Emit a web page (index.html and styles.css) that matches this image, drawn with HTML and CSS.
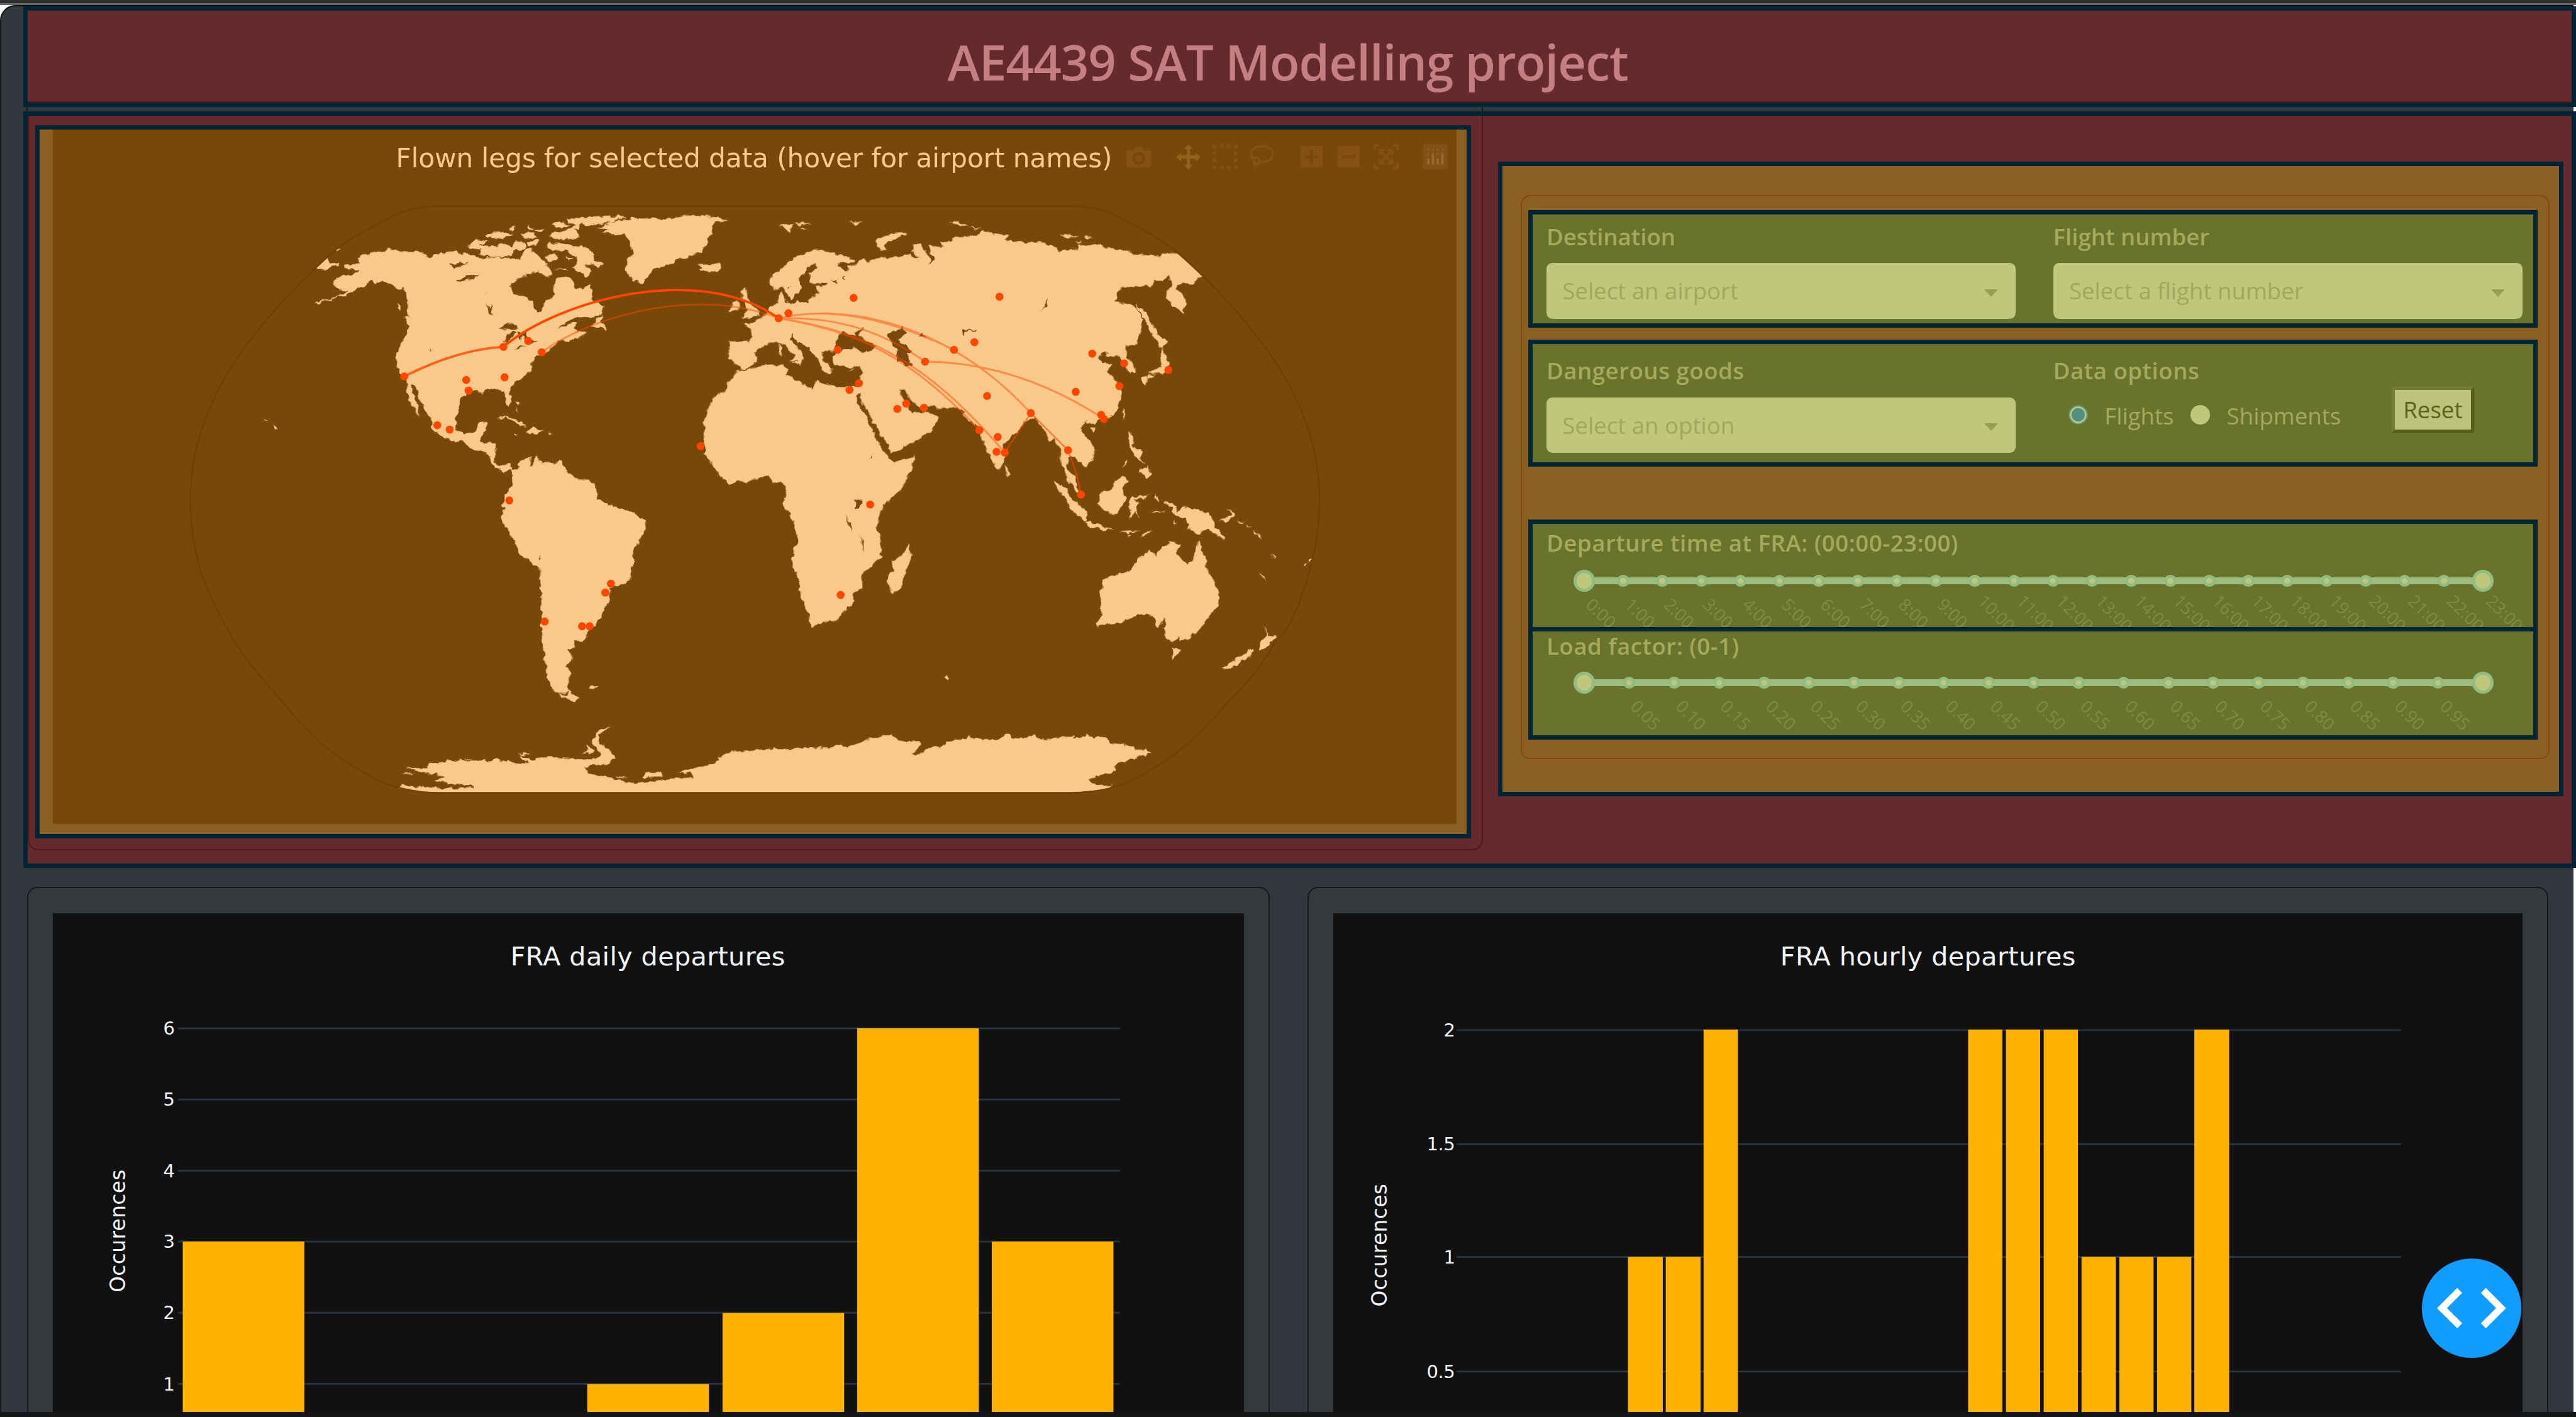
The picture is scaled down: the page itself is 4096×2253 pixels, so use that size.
FILE: index.html
```html
<!DOCTYPE html>
<html lang="en">
<head>
<meta charset="utf-8">
<title>AE4439 SAT Modelling project</title>
<link rel="stylesheet" href="styles.css">
</head>
<body>
<div class="screen">
  <div class="topstrip"></div>
  <div class="stage">
    <header class="outline header"><h1>AE4439 SAT Modelling project</h1></header>
    <div class="seam"></div>
    <section class="outline main-row">
      <div class="card-frame"></div>
      <div class="outline map-box">
        <svg class="map" viewBox="89 218 2377 1176">
          <defs>
            <!-- Roughens the coastlines -->
            <filter id="coast" filterUnits="userSpaceOnUse" x="300" y="330" width="1960" height="1050">
              <feTurbulence type="fractalNoise" baseFrequency="0.09" numOctaves="2" seed="4"/>
              <feDisplacementMap in="SourceGraphic" scale="10" xChannelSelector="R" yChannelSelector="G"/>
            </filter>
            <clipPath id="globe-clip"><path d="M746,348H1810C1850,348 1880,356 1899,369C1932,386 1960,400 1985,419C2080,500 2160,600 2192,669C2222,730 2234,790 2234,844C2234,890 2228,920 2221,950C2200,1030 2180,1070 2160,1084C2130,1140 2095,1170 2065,1203C2030,1245 1990,1280 1937,1308C1905,1330 1860,1341 1810,1341H746C700,1341 650,1330 619,1308C565,1280 525,1245 491,1203C460,1165 425,1130 396,1084C365,1030 345,990 335,950C328,920 322,890 322,844C322,790 334,730 364,669C396,600 476,500 571,419C596,400 624,386 657,369C676,356 706,348 746,348Z"/></clipPath>
          </defs>
          <rect class="map-bg" x="89" y="218" width="2377" height="1176"/>
          <g clip-path="url(#globe-clip)"><g filter="url(#coast)">
          <g class="land">
            <!-- North America, Greenland -->
            <g transform="translate(300 330) scale(.63776 .35714)">
              <path d="M475,290 500,278 540,262 565,252 580,262 600,266 640,268 668,290 690,278 715,272 740,265 760,275 780,278 800,300 850,290 880,298 900,303 915,285 925,255 935,248 950,270 965,290 980,325 975,345 935,370 910,390 890,410 885,435 895,465 930,485 945,500 945,525 955,562 968,545 972,510 985,500 1000,470 1000,440 1005,390 1025,385 1050,400 1060,440 1075,445 1095,420 1100,460 1108,495 1132,525 1125,560 1105,580 1060,575 1035,590 1008,635 1040,605 1062,600 1052,625 1060,650 1085,645 1075,665 1035,690 1010,690 990,725 970,750 950,765 940,790 940,835 900,880 885,905 883,940 887,980 880,1005 873,985 868,930 850,918 825,915 812,935 785,930 765,945 750,970 748,1000 740,1050 740,1100 760,1130 790,1118 800,1080 825,1072 815,1120 805,1168 845,1172 847,1200 840,1250 855,1285 880,1270 892,1300 880,1295 865,1315 850,1295 835,1265 820,1220 800,1210 775,1195 755,1160 738,1170 700,1140 675,1105 675,1060 655,1010 640,960 632,900 622,893 622,920 632,970 638,1010 643,1050 630,1010 615,970 610,920 608,870 590,840 580,770 585,730 605,675 615,620 600,570 615,575 612,540 607,460 605,445 585,445 560,415 535,405 525,420 515,400 490,430 465,460 430,480 365,512 370,500 420,480 455,450 430,445 412,415 425,385 470,370 480,350 445,345 445,330 485,320Z"/>
              <path d="M350,280 385,290 400,298 408,318 428,322 425,335 410,338 394,354 350,330ZM415,250 425,245 434,252 424,256ZM600,572 628,595 626,632 616,600ZM585,512 592,520 592,545 586,535Z"/>
              <path d="M765,240 790,208 830,215 800,235 850,240 855,225 890,240 900,215 925,225 925,250 895,260 890,285 830,290 800,275 805,255 780,250ZM985,225 1015,225 1030,232 1060,238 1075,228 1105,275 1110,310 1130,320 1115,345 1100,320 1085,325 1100,355 1088,385 1060,360 1045,345 1060,320 1060,290 1030,262 990,255 980,240ZM1030,115 1100,98 1195,98 1150,125 1105,140 1070,135 1065,160 1050,155 1070,180 1060,205 1000,205 985,185 1030,165 1060,135 1035,128ZM992,140 1010,120 1040,140 1020,155ZM815,185 850,170 895,180 865,200 825,198ZM880,158 900,145 890,168ZM930,142 950,155 935,165ZM945,165 975,155 970,170ZM910,180 950,180 955,200 925,205ZM930,215 960,210 950,240 932,235ZM975,290 1000,270 1010,290 985,318ZM958,358 980,335 998,372 980,385ZM1000,350 1030,345 1040,352ZM1030,290 1050,298 1040,308ZM1095,620 1128,562 1125,595 1142,632 1118,620 1105,625ZM1035,690 1060,655 1085,650 1065,675Z"/>
              <path d="M1115,155 1150,125 1210,105 1290,112 1370,92 1415,98 1465,118 1425,125 1420,180 1408,200 1410,215 1390,270 1340,295 1305,325 1270,340 1250,380 1237,420 1205,400 1190,350 1195,300 1212,270 1200,215 1185,185 1125,180 1145,160ZM1378,325 1390,322 1405,330 1440,318 1442,345 1410,364 1382,352 1395,340Z"/>
              <path d="M255,1080 266,1105 258,1115ZM232,1058 240,1066 236,1070ZM845,1062 865,1045 890,1052 925,1095 910,1095 890,1065 868,1052ZM925,1125 945,1100 970,1120 955,1130ZM892,1125 905,1130 895,1137ZM983,1122 995,1128 985,1134ZM900,972 914,985 902,990ZM900,1000 906,1030 901,1025Z"/>
            </g>
            <!-- Europe, Asia, northern Africa -->
            <g transform="translate(1150 330) scale(.70153 .35714)">
              <path d="M120,690 165,692 175,665 172,630 155,608 180,602 185,590 205,570 215,555 218,525 238,515 238,475 248,452 255,500 268,515 285,505 310,508 320,480 335,465 330,430 360,425 355,412 325,420 315,400 315,370 333,345 325,325 308,335 305,365 290,385 290,415 295,440 280,470 270,495 262,470 250,430 230,448 217,420 215,390 240,355 265,310 290,280 325,255 345,258 360,272 400,285 420,300 418,320 380,318 395,350 410,358 408,335 425,330 440,292 455,318 470,300 500,290 530,295 540,275 580,298 562,265 565,230 585,230 592,260 605,290 602,325 617,300 605,265 600,232 638,245 630,218 655,215 660,198 720,185 735,168 755,182 795,185 785,212 830,220 880,222 905,245 920,260 960,255 965,235 1010,235 1045,255 1080,258 1095,275 1160,288 1165,275 1200,272 1225,295 1250,340 1272,378 1255,390 1240,418 1200,420 1198,440 1220,475 1222,500 1216,562 1195,525 1172,480 1188,415 1180,378 1170,400 1145,400 1142,428 1070,430 1060,460 1052,500 1085,515 1105,530 1118,590 1112,660 1105,700 1080,710 1078,765 1092,790 1102,830 1090,848 1078,810 1068,790 1060,755 1035,765 1033,735 1008,765 1020,790 1045,795 1032,835 1050,870 1068,935 1060,1000 1045,1045 1010,1065 1000,1080 982,1068 968,1105 980,1135 1000,1180 1002,1240 978,1290 968,1258 945,1235 936,1260 935,1290 955,1340 967,1420 955,1400 940,1350 925,1290 918,1200 905,1150 892,1170 885,1120 870,1090 858,1050 845,1060 828,1075 820,1110 780,1180 785,1250 768,1302 755,1250 740,1200 728,1130 718,1080 712,1090 695,1055 670,1005 630,1008 600,995 590,1008 565,990 545,920 530,925 545,975 560,1028 600,1025 625,1055 610,1110 575,1160 510,1220 500,1170 475,1100 455,1020 433,960 438,930 425,950 430,980 455,1060 475,1150 500,1230 515,1265 567,1235 560,1300 540,1380 500,1450 485,1500 474,1570 280,1570 270,1520 250,1460 258,1390 245,1355 225,1365 215,1330 190,1335 165,1360 145,1352 120,1368 85,1300 80,1270 58,1220 62,1140 58,1070 78,965 112,920 118,880 142,830 175,822 190,808 250,800 262,825 255,850 290,880 320,920 330,880 385,905 430,905 438,870 438,808 420,815 395,810 370,790 370,765 385,740 420,722 440,738 465,735 475,715 440,680 430,660 447,630 420,640 425,660 405,660 395,640 385,660 375,710 380,738 345,742 345,775 370,825 358,838 345,825 335,780 315,725 285,690 270,652 268,685 290,730 300,765 292,808 285,785 265,780 282,760 255,710 235,692 205,708 182,745 185,780 170,815 150,820 118,770Z"/>
              <path d="M147,455 163,440 160,465 178,520 190,545 195,568 148,580 165,545 155,500ZM120,545 130,500 145,505 142,545ZM475,245 480,205 510,180 548,175 545,185 510,210 495,235 502,262ZM240,140 275,135 268,175ZM275,130 320,130 290,140ZM292,155 308,158 298,166ZM410,126 442,126 425,134ZM650,125 670,120 700,148 680,145ZM700,150 732,155 715,160ZM922,183 965,192 930,202ZM975,190 1000,198 980,202ZM955,215 972,222 962,228ZM1103,513 1125,550 1145,620 1160,675 1180,690 1165,725 1152,690 1120,580ZM1165,725 1178,775 1182,835 1155,848 1130,840 1165,810 1160,770ZM1112,865 1130,850 1132,870 1125,905ZM1130,850 1150,850 1135,868ZM1070,1005 1078,1035 1073,1057ZM992,1098 1005,1100 998,1128ZM1083,1120 1097,1140 1093,1185 1120,1215 1112,1250 1125,1275 1105,1250 1090,1205ZM1105,1305 1130,1280 1137,1315 1128,1342 1118,1315ZM1082,1248 1068,1298 1080,1270ZM785,1275 798,1320 790,1337ZM1010,1410 1035,1400 1068,1325 1082,1350 1070,1390 1078,1430 1060,1510 1025,1495 1012,1460ZM242,700 248,720 245,765 240,735ZM265,785 290,790 285,805ZM352,828 370,832 358,842ZM407,828 422,822 415,832Z"/>
            </g>
            <!-- South America, Antarctica west -->
            <g transform="translate(300 760) scale(.63776 .39541)">
              <path d="M888,90 905,75 915,45 940,28 937,70 943,72 950,30 970,60 1000,60 1020,50 1030,85 1045,105 1065,128 1090,128 1105,150 1117,195 1112,215 1160,245 1200,262 1240,300 1244,340 1225,390 1212,430 1210,500 1200,555 1190,572 1150,595 1143,660 1125,710 1108,755 1085,780 1088,805 1075,820 1053,818 1055,850 1035,855 1047,880 1040,910 1028,930 1045,960 1032,1010 1045,1045 1070,1065 1055,1076 1020,1060 995,1020 980,975 980,930 970,850 965,790 967,700 965,600 962,520 945,490 910,450 890,380 865,315 858,290 870,255 862,245 870,200 890,155ZM1093,1022 1103,1010 1115,1018 1105,1026Z"/>
              <path d="M605,1362 665,1365 668,1345 740,1330 835,1332 845,1325 890,1340 935,1345 905,1312 940,1325 990,1315 1060,1325 1115,1322 1122,1300 1100,1245 1118,1205 1152,1183 1122,1222 1115,1250 1145,1280 1163,1325 1140,1345 1080,1358 1090,1385 1140,1405 1220,1430 1290,1415 1372,1402 1365,1388 1330,1382 1385,1358 1440,1335 1438,1320 1470,1292 1590,1280V1500H590V1437L700,1450 788,1448 788,1440 735,1436 680,1415 712,1402 690,1392 650,1385ZM1085,1262 1108,1290 1105,1305 1072,1298 1090,1292ZM1232,1405 1250,1378 1275,1375 1288,1390 1280,1402ZM903,1300 940,1303 915,1310ZM593,1378 630,1390 610,1390ZM760,1317 785,1325 765,1325ZM1165,1400 1195,1402 1170,1406Z"/>
            </g>
            <!-- Southern Africa, Oceania, Antarctica east -->
            <g transform="translate(1150 760) scale(.70153 .43367)">
              <path d="M275,285 285,325 287,360 277,390 270,435 288,510 293,580 313,650 315,685 322,691 345,677 375,670 395,640 418,600 422,558 442,540 440,485 485,425 487,350 477,320 477,285ZM553,368 560,410 530,545 515,558 505,540 503,495 515,475 513,435 540,410Z"/>
              <path d="M1010,692 1005,678 1018,650 1015,580 1022,510 1045,490 1085,475 1105,430 1135,393 1153,412 1165,375 1185,370 1180,355 1210,370 1197,405 1228,449 1240,425 1255,348 1262,400 1270,410 1272,465 1290,515 1303,560 1300,605 1280,650 1260,690 1240,728 1208,748 1205,735 1190,747 1173,738 1172,660 1155,695 1145,655 1130,642 1090,655 1065,678 1035,680ZM1188,776 1212,778 1190,817ZM1413,686 1422,725 1440,732 1420,765 1398,788 1405,750 1418,725ZM1385,775 1388,792 1330,857 1312,850 1345,815ZM1400,480 1417,515 1405,500ZM1505,450 1515,440 1510,458ZM1516,432 1526,425 1520,438ZM1430,402 1436,415 1434,432ZM638,890 645,885 652,895 645,903Z"/>
              <path d="M902,120 915,125 955,200 983,240 981,282 950,240 925,180ZM978,285 990,280 1050,315 1020,312 985,298ZM1085,215 1092,185 1132,176 1125,188 1097,195 1110,210 1100,230 1113,270 1100,240 1088,275ZM1062,318 1080,316 1110,320 1085,325ZM1082,330 1092,338 1086,340ZM1112,342 1125,320 1142,318ZM1150,168 1156,200 1148,190ZM1138,240 1172,240 1150,248ZM1195,270 1202,285 1196,290ZM1170,210 1190,205 1200,225 1200,242 1222,220 1278,248 1290,285 1300,310 1317,345 1295,338 1275,305 1255,327 1225,312 1232,290 1222,270 1190,250 1190,225ZM1303,274 1325,265 1332,250 1322,230 1340,248 1330,275 1315,283ZM1348,268 1362,292 1355,288ZM1368,292 1382,300 1372,300ZM1385,312 1395,330 1388,328ZM1392,320 1402,332 1404,350Z"/>
              <path d="M150,1182 180,1182 210,1178 230,1163 240,1172 310,1163 360,1165 380,1148 405,1160 455,1135 510,1110 520,1125 545,1140 580,1138 582,1150 562,1188 575,1190 605,1162 630,1158 665,1130 697,1130 700,1118 705,1130 770,1130 795,1108 805,1123 835,1128 855,1112 865,1127 890,1130 905,1122 980,1120 985,1107 990,1123 1030,1125 1040,1142 1075,1150 1100,1168 1125,1170 1140,1182 1060,1225 1045,1258 990,1282 990,1298 1010,1315 1040,1310 1040,1370H150Z"/>
            </g>
          </g>
          <g class="lake">
            <path transform="translate(300 330) scale(.63776 .35714)" d="M725,325 745,317 770,322 755,335 735,342ZM737,400 765,380 802,375 775,395 750,408ZM825,455 812,480 820,465ZM818,512 828,540 832,512 838,570 825,550ZM852,632 885,600 905,630 895,640 875,630ZM868,700 875,660 900,645 885,680ZM903,645 930,650 927,690 915,660 910,685ZM897,722 925,710 905,728ZM930,690 958,685 945,697ZM672,722 678,735 673,738Z"/>
            <path transform="translate(1150 330) scale(.70153 .35714)" d="M502,665 515,640 540,630 545,655 528,680 535,700 550,712 562,740 550,750 562,800 548,812 525,780 525,730ZM580,672 585,645 595,678 586,665ZM682,662 686,637 716,637 716,642 690,642 686,665ZM883,488 888,520 866,556 882,525ZM367,395 383,405 378,420ZM397,378 404,400 396,395ZM262,435 270,430 265,445ZM425,1445 440,1437 440,1460 432,1487 422,1485ZM460,1228 464,1238 461,1242Z"/>
            <path transform="translate(1150 760) scale(.70153 .43367)" d="M403,248 417,320 408,300ZM438,330 446,398 440,375Z"/>
            <path transform="translate(300 760) scale(.63776 .39541)" d="M957,453 969,470 964,472ZM1000,1040 1027,1048 1038,1022 1030,1055Z"/>
          </g>
          </g></g>
          <path class="globe" d="M746,348H1810C1850,348 1880,356 1899,369C1932,386 1960,400 1985,419C2080,500 2160,600 2192,669C2222,730 2234,790 2234,844C2234,890 2228,920 2221,950C2200,1030 2180,1070 2160,1084C2130,1140 2095,1170 2065,1203C2030,1245 1990,1280 1937,1308C1905,1330 1860,1341 1810,1341H746C700,1341 650,1330 619,1308C565,1280 525,1245 491,1203C460,1165 425,1130 396,1084C365,1030 345,990 335,950C328,920 322,890 322,844C322,790 334,730 364,669C396,600 476,500 571,419C596,400 624,386 657,369C676,356 706,348 746,348Z"/>
          <g class="legs">
            <path class="strong" d="M852,586C940,510 1180,440 1318,537.5"/>
            <path class="mid" d="M684,636Q775,590 852,586"/>
            <path d="M917,595C990,540 1170,480 1318,537.5M1318,537.5C1400,518 1500,535 1615,591M1318,537.5C1410,515 1590,530 1745,698M1318,537.5C1400,535 1480,550 1566,611M1318,537.5C1450,560 1540,600 1658,727M1318,537.5C1460,560 1560,600 1701,765M1566,611C1680,612 1780,650 1869,708"/>
            <path class="thin" d="M1745,698 1701,765M1745,698 1808,761Q1824,800 1830,836"/>
          </g>
          <path class="airports" d="M684,636h0M789,642h0M793,660h0M854,637.5h0M852,586h0M894,576h0M917,595h0M740,718.6h0M761,726h0M1186,754h0M862,846h0M1318,537.5h0M1334.5,529h0M1445,503h0M1692,501h0M1615,591h0M1649.5,578h0M1566,611h0M1418,591h0M1454,647.5h0M1438,659h0M1534,682h0M1519,691h0M1564,689h0M1671,669h0M1821,662h0M1849,597.5h0M1903,614h0M1978,625h0M1895,652.5h0M1864,701h0M1869,708h0M1745,698h0M1658,727h0M1689,738.6h0M1687,763.6h0M1701,765h0M1808,761h0M1830,836h0M1473,853h0M1034,987h0M1024.5,1002h0M922,1051h0M985,1059h0M998,1059h0M1423,1006h0"/>
          <text class="map-title" x="670" y="281.500" textLength="1213">Flown legs for selected data (hover for airport names)</text>
          <g class="modebar">
            <path fill-rule="evenodd" d="M1911,253h8l4,-6h10l4,6h8q4,0 4,4v21q0,4 -4,4h-34q-4,0 -4,-4v-21q0,-4 4,-4ZM1928,256a11,11 0 1 0 .1,0ZM1928,260.500a6,6 0 1 1 -.1,0Z"/>
            <path class="active" d="M2012,243l7,8h-4.500v10.500h10v-4.500l8,7.500 -8,7.500v-4.500h-10v10.500h4.500l-7,8 -7,-8h4.500v-10.500h-10v4.500l-8,-7.500 8,-7.500v4.500h10v-10.500h-4.500Z"/>
            <path d="M2053,243h6v6h-6ZM2066,243h6v6h-6ZM2077,243h6v6h-6ZM2089,243h6v6h-6ZM2053,255h6v6h-6ZM2089,255h6v6h-6ZM2053,267h6v6h-6ZM2089,267h6v6h-6ZM2053,279h6v6h-6ZM2066,279h6v6h-6ZM2077,279h6v6h-6ZM2089,279h6v6h-6Z"/>
            <path class="line" d="M2123,270C2110,256 2124,246 2137,246C2160,247 2162,272 2136,273L2131,272M2121,267C2127,262 2134,268 2131,273C2128,278 2121,276 2121,267L2126,280L2133,273"/>
            <path fill-rule="evenodd" d="M2202,246h37v36h-37ZM2218,253v9h-8v5h8v9h5v-9h8v-5h-8v-9ZM2265,246h37v36h-37ZM2273,261v6h21v-6Z"/>
            <path class="line" d="M2327,253v-8h8M2358,245h8v8M2366,275v8h-8M2335,283h-8v-8M2336,253L2357,275M2357,253L2336,275M2336,261v-8h8M2349,253h8v8M2357,267v8h-8M2344,275h-8v-8"/>
            <path class="logo" d="M2411,243h38q2,0 2,2v38q0,2 -2,2h-38q-2,0 -2,-2v-38q0,-2 2,-2Z"/>
            <path class="logo-bars" d="M2418,267v10M2426,259v18M2434,267v10M2442,259v18"/>
            <path class="logo-dots" d="M2418,251v3M2426,251v3M2434,251v3M2442,251v3M2418,258v3M2434,258v3"/>
          </g>
        </svg>
      </div>
      <div class="outline side">
        <div class="side-card">
          <div class="outline panel panel-a">
            <div class="field"><label>Destination</label><div class="select">Select an airport<i></i></div></div>
            <div class="field"><label>Flight number</label><div class="select">Select a flight number<i></i></div></div>
          </div>
          <div class="outline panel panel-b">
            <div class="field"><label class="wide">Dangerous goods</label><div class="select">Select an option<i></i></div></div>
            <div class="field options"><label class="wide">Data options</label>
              <div class="radios"><b class="radio on"></b><span class="w1">Flights</span><b class="radio"></b><span class="w2">Shipments</span></div>
            </div>
            <div class="reset">Reset</div>
          </div>
          <div class="outline panel-c">
            <label class="wide">Departure time at FRA: (00:00-23:00)</label>
            <div class="slider">
              <div class="m end"><span>0:00</span></div><div class="m"><span>1:00</span></div><div class="m"><span>2:00</span></div><div class="m"><span>3:00</span></div><div class="m"><span>4:00</span></div><div class="m"><span>5:00</span></div><div class="m"><span>6:00</span></div><div class="m"><span>7:00</span></div><div class="m"><span>8:00</span></div><div class="m"><span>9:00</span></div><div class="m"><span>10:00</span></div><div class="m"><span>11:00</span></div><div class="m"><span>12:00</span></div><div class="m"><span>13:00</span></div><div class="m"><span>14:00</span></div><div class="m"><span>15:00</span></div><div class="m"><span>16:00</span></div><div class="m"><span>17:00</span></div><div class="m"><span>18:00</span></div><div class="m"><span>19:00</span></div><div class="m"><span>20:00</span></div><div class="m"><span>21:00</span></div><div class="m"><span>22:00</span></div><div class="m end"><span>23:00</span></div>
            </div>
          </div>
          <div class="outline panel-d">
            <label class="wide">Load factor: (0-1)</label>
            <div class="slider">
              <div class="m end"></div><div class="m"><span>0.05</span></div><div class="m"><span>0.10</span></div><div class="m"><span>0.15</span></div><div class="m"><span>0.20</span></div><div class="m"><span>0.25</span></div><div class="m"><span>0.30</span></div><div class="m"><span>0.35</span></div><div class="m"><span>0.40</span></div><div class="m"><span>0.45</span></div><div class="m"><span>0.50</span></div><div class="m"><span>0.55</span></div><div class="m"><span>0.60</span></div><div class="m"><span>0.65</span></div><div class="m"><span>0.70</span></div><div class="m"><span>0.75</span></div><div class="m"><span>0.80</span></div><div class="m"><span>0.85</span></div><div class="m"><span>0.90</span></div><div class="m"><span>0.95</span></div><div class="m end"></div>
            </div>
          </div>
        </div>
      </div>
    </section>
    <section class="charts">
      <div class="chart-card left">
        <svg viewBox="89 1546 2017 845">
          <rect class="plot" x="89" y="1546" width="2017" height="845"/>
          <path class="grid" d="M301,1741H1896M301,1861.500H1896M301,1982H1896M301,2102H1896M301,2222.500H1896M301,2343H1896"/>
          <path class="bars" d="M309,2102H515V2391H309ZM994,2343.500H1200V2391H994ZM1223,2223H1429V2391H1223ZM1451,1741H1657V2391H1451ZM1679,2102H1885V2391H1679Z"/>
          <text class="chart-title" x="864" y="1634" textLength="465">FRA daily departures</text>
          <g class="ticks"><text x="295" y="1752">6</text><text x="295" y="1872">5</text><text x="295" y="1993">4</text><text x="295" y="2113">3</text><text x="295" y="2233">2</text><text x="295" y="2354">1</text></g>
          <text class="axis" transform="translate(211 2188) rotate(-90)" textLength="208">Occurences</text>
        </svg>
      </div>
      <div class="chart-card right">
        <svg viewBox="2258 1546 2014 845">
          <rect class="plot" x="2258" y="1546" width="2014" height="845"/>
          <path class="grid" d="M2467,1744H4066M2467,1937H4066M2467,2128H4066M2467,2322H4066"/>
          <path class="bars" d="M2757,2128H2816V2391H2757ZM2821,2128H2880V2391H2821ZM2885,1743H2943V2391H2885ZM3333,1743H3391V2391H3333ZM3397,1743H3455V2391H3397ZM3461,1743H3519V2391H3461ZM3525,2128H3583V2391H3525ZM3589,2128H3647V2391H3589ZM3653,2128H3711V2391H3653ZM3716,1743H3775V2391H3716Z"/>
          <text class="chart-title" x="3015" y="1634" textLength="500">FRA hourly departures</text>
          <g class="ticks"><text x="2464" y="1755">2</text><text x="2464" y="1947">1.5</text><text x="2464" y="2139">1</text><text x="2464" y="2333">0.5</text></g>
          <text class="axis" transform="translate(2349 2212) rotate(-90)" textLength="208">Occurences</text>
        </svg>
      </div>
    </section>
  </div>
  <div class="bottomstrip"></div>
  <div class="debug"><svg viewBox="0 0 168 168"><path d="M64,54 34,84 64,114M104,54 134,84 104,114"/></svg></div>
</div>
</body>
</html>
```

FILE: styles.css
```css
*, *::before { box-sizing: border-box; }
html, body { margin: 0; background: #fff; overflow: hidden; }
.screen {
  zoom: 0.93902;
  position: relative;
  width: 4362px;
  height: 2400px;
  overflow: hidden;
  background: #fff;
  font-family: "Open Sans", "Noto Sans", sans-serif;
}
.topstrip {
  height: 9px;
  background: linear-gradient(#2f2f2f 0 5px, #616161 5px 8px, #222 8px);
}
.stage {
  width: 4358px;
  height: 2382px;
  padding-left: 37px;
  border-left: 3px solid #17191c;
  border-top: 3px solid #0d1013;
  border-top-left-radius: 26px;
  background: #32373e;
}
.outline { border: 8px solid #022536; }

.header {
  width: 4323px;
  height: 170px;
  background: linear-gradient(#642a2e, #642a2e 153px, #571218 153px);
  text-align: center;
}
.header h1 {
  margin: 0;
  padding-right: 40px;
  line-height: 140px;
  padding-top: 17px;
  font-size: 83px;
  font-weight: 600;
  letter-spacing: -1px;
  color: #c47f83;
}
.seam {
  height: 7px;
  margin-left: 6px;
  width: 2466px;
  border-left: 3px solid #17191c;
  border-right: 3px solid #17191c;
}
.main-row {
  position: relative;
  display: flex;
  align-items: flex-start;
  width: 4323px;
  height: 1282px;
  background: #642a2e;
}
.card-frame {
  position: absolute;
  left: 0;
  top: 0;
  width: 2465px;
  height: 1244px;
  border: 3px solid #571218;
  border-top: 0;
  border-radius: 0 0 18px 18px;
}
.map-box {
  position: relative;
  width: 2431px;
  height: 1208px;
  margin: 16px 0 0 13px;
  padding-left: 22px;
  background: #8b5f22;
}
.map { display: block; width: 2377px; height: 1176px; }
.map-bg { fill: #784809; }
.land { fill: #f9c98a; }
.lake { fill: #784809; }
.globe { fill: none; stroke: #6d4106; stroke-width: 2.5; }
.legs { fill: none; stroke: #ff4500; stroke-width: 3; stroke-opacity: .48; }
.legs .strong { stroke-width: 4; stroke-opacity: 1; }
.legs .mid { stroke-width: 4; stroke-opacity: .8; }
.legs .thin { stroke-width: 2; stroke-opacity: .7; }
.airports { stroke: #ff4500; stroke-width: 13.500; stroke-linecap: round; }
text { font-family: "DejaVu Sans", sans-serif; }
.map-title { font-size: 45px; fill: #f9c98a; }
.modebar { fill: #845113; }
.modebar .active { fill: #926120; }
.modebar .line { fill: none; stroke: #845113; stroke-width: 4; }
.modebar .logo { fill: #815118; }
.modebar .logo-bars { stroke: #9a6928; stroke-width: 4; }
.modebar .logo-dots { stroke: #89622a; stroke-width: 3; }

.side {
  width: 1804px;
  height: 1075px;
  margin: 78px 0 0 46px;
  padding: 49px 0 0 31px;
  background: #8b5f22;
}
.side-card {
  width: 1742px;
  height: 955px;
  padding: 24px 0 0 11px;
  border: 3px solid #7b4b12;
  border-radius: 16px;
}
.panel {
  display: flex;
  width: 1709px;
  padding-left: 23px;
  background: #69732c;
}
.panel-a { height: 199px; padding-top: 9px; }
.panel-b { height: 215px; padding-top: 17px; margin-top: 20px; }
.field { width: 795px; margin-right: 63px; flex: none; }
.panel-b .options { width: 510px; }
label {
  display: block;
  line-height: 56px;
  font-size: 39px;
  font-weight: 600;
  color: #a3aa5c;
  white-space: nowrap;
}
label.wide { letter-spacing: .55px; }
.select {
  display: flex;
  justify-content: space-between;
  align-items: center;
  height: 94px;
  margin-top: 17px;
  padding: 0 30px 0 27px;
  border-radius: 10px;
  background: #bfc77d;
  font-size: 39px;
  color: #a1a75b;
}
.select i {
  border: 12.500px solid transparent;
  border-top: 13px solid #989e51;
  border-bottom: 0;
  margin-top: 8px;
}
.radios {
  display: flex;
  align-items: center;
  height: 60px;
  margin-top: 17px;
  padding-left: 26px;
  font-size: 39px;
  color: #a3aa5c;
}
.radio { flex: none; width: 33px; height: 33px; border-radius: 50%; background: #bfc77d; }
.radio.on { border: 3px solid #5c9478; background: #558f80; box-shadow: inset 0 0 0 3px #bfc77d; }
.radios span { margin: 2px 0 0 28px; width: 146px; flex: none; }
.radios .w2 { width: 200px; }
.reset {
  width: 140px;
  height: 78px;
  margin-top: 55px;
  border: 6px solid;
  border-color: #737d36 #555c13 #555c13 #737d36;
  background: #bac379;
  text-align: center;
  font-size: 39px;
  line-height: 68px;
  color: #5b6319;
}
.panel-c, .panel-d {
  width: 1709px;
  padding-left: 23px;
  background: #69732c;
  overflow: hidden;
}
.panel-c { height: 189px; margin-top: 90px; padding-top: 7px; }
.panel-d { height: 183px; border-top: 0; }
.panel-c label, .panel-d label { line-height: 49px; margin-bottom: -1px; }
.slider {
  display: flex;
  justify-content: space-between;
  align-items: center;
  width: 1522px;
  height: 40px;
  margin: 21px 0 0 64px;
  background: linear-gradient(#9dbc7f, #9dbc7f) center / 100% 12px no-repeat;
}
.panel-d .slider { margin-top: 19px; }
.m { display: flex; flex-direction: column; align-items: flex-start; width: 0; height: 21px; }
.m::before {
  content: "";
  flex: none;
  width: 21px;
  height: 21px;
  margin-left: -10.500px;
  border: 5.400px solid #93bd80;
  border-radius: 50%;
  background: #bfc77d;
}
.m.end { height: 37px; }
.m.end::before { width: 37px; height: 37px; margin-left: -18.500px; border: 5.400px solid #93bd80; }
.m span {
  flex: none;
  margin-top: 24px;
  line-height: 40px;
  font-size: 29px;
  color: #828a42;
  transform: rotate(45deg);
}
.m.end span { margin-top: 16px; }

.charts { display: flex; gap: 64px; margin-top: 31px; padding-left: 7px; }
.chart-card {
  width: 2104px;
  height: 890px;
  padding: 43px 0 0 41px;
  border: 3px solid #15181a;
  border-bottom: 0;
  border-radius: 18px 18px 0 0;
  background: #33393d;
}
.chart-card svg { display: block; width: 2017px; height: 845px; }
.chart-card.right { width: 2101px; }
.chart-card.right svg { width: 2014px; }
.plot { fill: #111; }
.grid { stroke: #283442; stroke-width: 3; }
.bars { fill: #ffb300; }
.chart-title { font-size: 44px; fill: #f2f5fa; }
.ticks { font-size: 31px; fill: #f2f5fa; text-anchor: end; }
.ticks text { letter-spacing: -.5px; }
.axis { font-size: 35px; fill: #f2f5fa; }
.bottomstrip { height: 9px; background: #131517; position: relative; }
.debug {
  position: absolute;
  left: 4101px;
  top: 2131px;
  width: 168px;
  height: 168px;
  border-radius: 50%;
  background: #119dff;
}
.debug path { fill: none; stroke: #fff; stroke-width: 12; }
```
